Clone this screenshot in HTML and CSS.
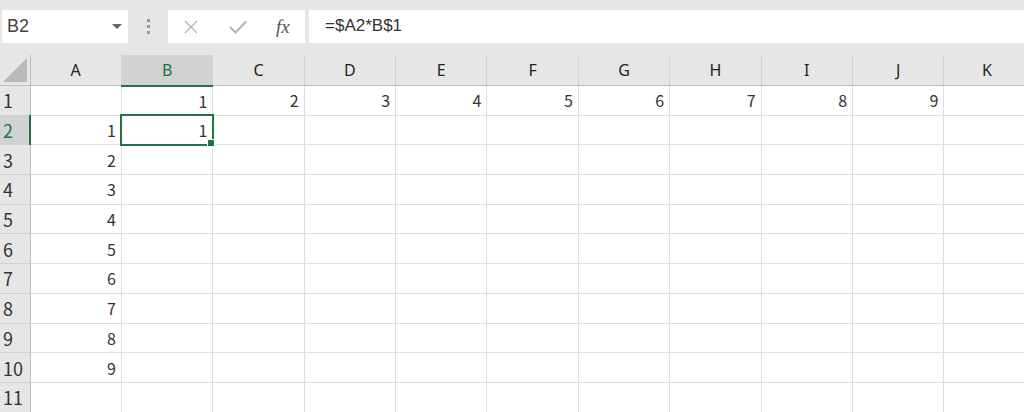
FILE: index.html
```html
<!DOCTYPE html>
<html lang="ja">
<head>
<meta charset="UTF-8" />
<meta name="viewport" content="width=device-width, initial-scale=1.0" />
<title>Book1 - Excel</title>
<link rel="stylesheet" href="styles.css">
</head>
<body>

<div class="toolbar">
  <div class="namebox">
    <span>B2</span>
    <svg class="caret" width="10" height="6" viewBox="0 0 10 6"><polygon points="0,0 10,0 5,5" fill="#666"/></svg>
  </div>
  <div class="grip"><i></i><i></i><i></i></div>
  <div class="fbuttons">
    <svg width="14" height="14" viewBox="0 0 14 14"><path d="M1 1 L13 13 M13 1 L1 13" stroke="#b4b4b4" stroke-width="1.4" fill="none"/></svg>
    <svg width="18" height="14" viewBox="0 0 18 14"><path d="M1 7 L6.5 12.5 L17 1.5" stroke="#b4b4b4" stroke-width="2" fill="none"/></svg>
    <span class="fx">fx</span>
  </div>
  <div class="formula">=$A2*B$1</div>
</div>

<table class="sheet">
  <colgroup>
    <col class="rowhead-col">
    <col><col><col><col><col><col><col><col><col><col>
    <col class="rest">
  </colgroup>
  <thead>
    <tr>
      <th class="corner"><svg width="30" height="30" viewBox="0 0 30 30"><polygon points="27,3 27,27 3,27" fill="#bababa"/></svg></th>
      <th>A</th><th class="sel">B</th><th>C</th><th>D</th><th>E</th><th>F</th><th>G</th><th>H</th><th>I</th><th>J</th><th>K</th>
    </tr>
  </thead>
  <tbody>
    <tr><th>1</th><td></td><td>1</td><td>2</td><td>3</td><td>4</td><td>5</td><td>6</td><td>7</td><td>8</td><td>9</td><td></td></tr>
    <tr><th class="sel">2</th><td>1</td><td class="active">1<span class="handle"></span></td><td></td><td></td><td></td><td></td><td></td><td></td><td></td><td></td><td></td></tr>
    <tr><th>3</th><td>2</td><td></td><td></td><td></td><td></td><td></td><td></td><td></td><td></td><td></td><td></td></tr>
    <tr><th>4</th><td>3</td><td></td><td></td><td></td><td></td><td></td><td></td><td></td><td></td><td></td><td></td></tr>
    <tr><th>5</th><td>4</td><td></td><td></td><td></td><td></td><td></td><td></td><td></td><td></td><td></td><td></td></tr>
    <tr><th>6</th><td>5</td><td></td><td></td><td></td><td></td><td></td><td></td><td></td><td></td><td></td><td></td></tr>
    <tr><th>7</th><td>6</td><td></td><td></td><td></td><td></td><td></td><td></td><td></td><td></td><td></td><td></td></tr>
    <tr><th>8</th><td>7</td><td></td><td></td><td></td><td></td><td></td><td></td><td></td><td></td><td></td><td></td></tr>
    <tr><th>9</th><td>8</td><td></td><td></td><td></td><td></td><td></td><td></td><td></td><td></td><td></td><td></td></tr>
    <tr><th>10</th><td>9</td><td></td><td></td><td></td><td></td><td></td><td></td><td></td><td></td><td></td><td></td></tr>
    <tr><th>11</th><td></td><td></td><td></td><td></td><td></td><td></td><td></td><td></td><td></td><td></td><td></td></tr>
  </tbody>
</table>

</body>
</html>
```

FILE: styles.css
```css
html, body { margin: 0; padding: 0; }
body { width: 1024px; height: 412px; overflow: hidden; background: #fff; font-family: "Noto Sans", "Liberation Sans", sans-serif; }

/* formula bar */
.toolbar { display: flex; align-items: center; height: 55px; padding: 0 0 0 2px; box-sizing: border-box; background: #e6e6e6; }
.namebox { display: flex; align-items: center; justify-content: space-between; width: 126px; height: 33px; margin-bottom: 2px; padding: 0 6px 0 5px; box-sizing: border-box; background: #fff; font-family: "Liberation Sans", sans-serif; font-size: 18px; color: #444; }
.namebox .caret { margin-top: 1px; }
.grip { display: flex; flex-direction: column; align-items: center; gap: 3px; width: 40px; margin-bottom: 2px; }
.grip i { width: 3px; height: 3px; background: #999; }
.fbuttons { display: flex; align-items: center; width: 137px; height: 33px; margin-bottom: 2px; padding: 0 0 0 16px; box-sizing: border-box; background: #fff; gap: 32px; }
.fbuttons svg:nth-child(2) { margin-left: -1px; }
.fx { margin-left: -3px; font-family: "Liberation Serif", serif; font-style: italic; font-size: 19px; color: #555; }
.formula { flex: 1; height: 33px; margin: 0 0 2px 4px; padding-left: 16px; line-height: 31px; background: #fff; font-family: "Liberation Sans", sans-serif; font-size: 17px; color: #333; }

/* sheet */
.sheet { table-layout: fixed; border-collapse: collapse; width: 1030px; }
.sheet col { width: 91.4px; }
.sheet col.rowhead-col { width: 30px; }
.sheet col.rest { width: 86px; }
.sheet thead th { height: 30px; padding: 0; background: #e6e6e6; border-right: 1px solid #d2d2d2; border-bottom: 1px solid #bdbdbd; font-weight: normal; font-size: 16px; color: #222; text-align: center; box-sizing: border-box; }
.sheet thead th.corner { border-right: 1px solid #bdbdbd; vertical-align: top; }
.sheet thead th.corner svg { display: block; }
.sheet thead th.sel { background: #d2d2d2; color: #217346; border-bottom: 2px solid #217346; }
.sheet tbody tr { height: 29.7px; }
.sheet tbody th { padding: 0 0 0 3px; background: #e6e6e6; border-right: 1px solid #bdbdbd; border-bottom: 1px solid #d0d0d0; font-weight: normal; font-size: 18px; color: #333; text-align: left; font-family: "Noto Sans CJK JP", "Noto Sans", sans-serif; }
.sheet tbody th.sel { background: #d2d2d2; color: #217346; border-right: 2px solid #217346; }
.sheet td { padding: 0 5px 0 0; border-right: 1px solid #dedede; border-bottom: 1px solid #dedede; text-align: right; font-family: "Noto Sans CJK JP", "Noto Sans", sans-serif; font-size: 16px; color: #333; }
.sheet td.active { position: relative; outline: 2px solid #217346; outline-offset: -1px; }
.handle { position: absolute; right: -3px; bottom: -3px; width: 6px; height: 6px; background: #217346; border: 1px solid #fff; }
```
